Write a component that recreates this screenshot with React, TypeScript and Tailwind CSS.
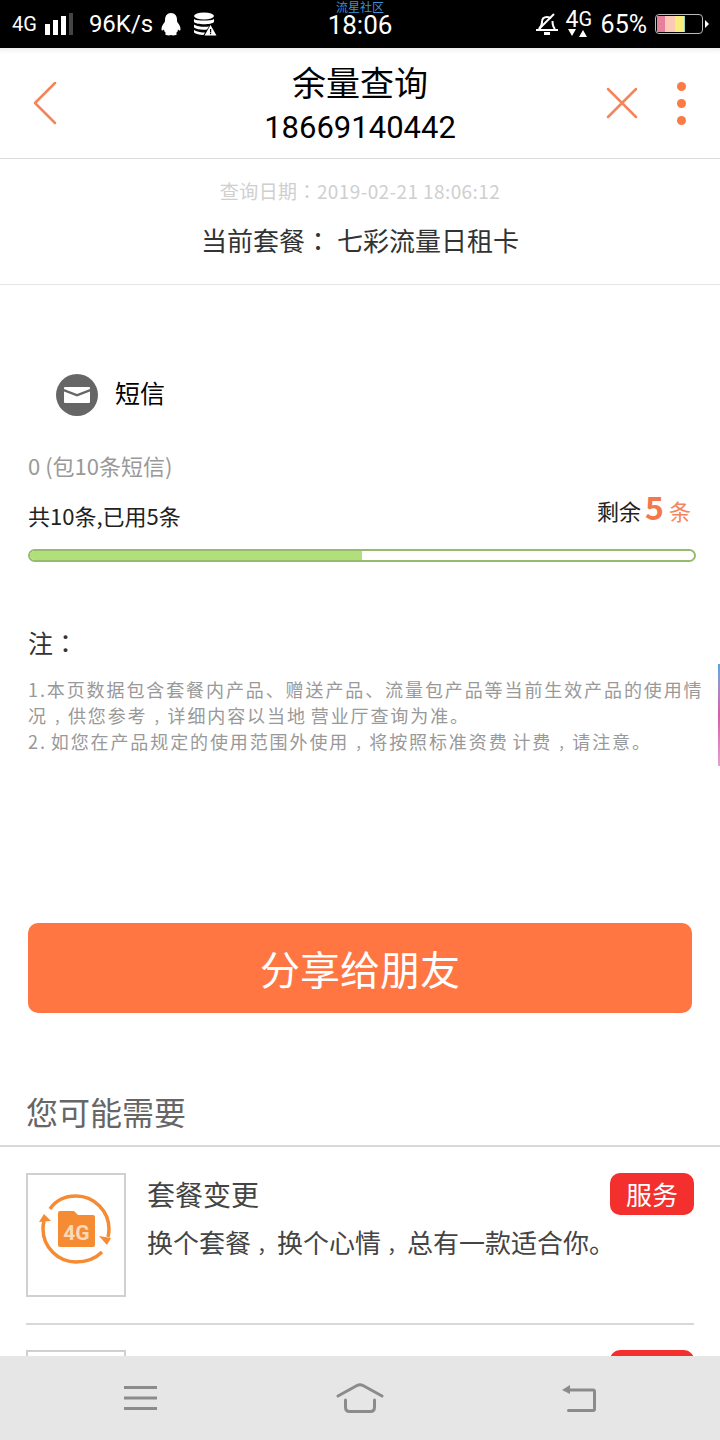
const FONT = '[font-family:"Noto_Sans_CJK_SC","Noto_Sans",sans-serif]'

// the phone font centres its colons and pushes commas to the middle of the cell
function Colon() {
  return <span className='[font-family:"Noto_Sans_CJK_TC",sans-serif]'>：</span>
}

function StatusBar() {
  return (
    <div className="relative flex h-[48px] shrink-0 items-center justify-between bg-black pl-[12px] pr-[11px] text-white">
      <div className="flex items-center">
        <span className="text-[20px] leading-none [font-family:Roboto,sans-serif]">4G</span>
        <svg width="30" height="22" viewBox="0 0 30 22" className="ml-[8px]">
          <rect x="0" y="11" width="5" height="11" fill="#fff" />
          <rect x="8" y="7" width="5" height="15" fill="#fff" />
          <rect x="16" y="3" width="5" height="19" fill="#fff" />
          <rect x="24" y="0" width="4" height="22" fill="#444" />
        </svg>
        <span className="ml-[14px] text-[24px] leading-none [font-family:Roboto,sans-serif]">96K/s</span>
        <svg width="20" height="24" viewBox="0 0 20 24" className="ml-[8px]" fill="#fff">
          <path d="M10 1c4 0 6 3 6 7 0 1 0 2 1 3 1.500 2 2.500 4 2.500 6 0 2-1 2-2.500 .5 0 1.500-1 3-2 3.500 1 .5 1 1.500 0 2-2 .5-4 .5-5 0-1 .5-3 .5-5 0-1-.5-1-1.500 0-2-1-.5-2-2-2-3.500-1.500 1.500-2.500 1.500-2.500-.5 0-2 1-4 2.500-6 1-1 1-2 1-3 0-4 2-7 6-7z" />
        </svg>
        <svg width="24" height="24" viewBox="0 0 24 24" className="ml-[12px]" fill="#fff">
          <ellipse cx="11" cy="4" rx="10" ry="3.500" />
          <path d="M1 7c2 2 18 2 20 0v3c-2 3-18 3-20 0z" />
          <path d="M1 12.500c3 2.500 12 2.500 15 2l-2 3c-5 .5-10 0-13-2z" />
          <path d="M1 18c3 2 8 2.500 11 2.500l-1.500 2.500c-4 0-8-1-9.500-2.500z" />
          <path d="M17.500 13l6 10.500h-12z" />
          <rect x="17" y="17" width="1.200" height="3.500" fill="#000" />
          <rect x="17" y="21" width="1.200" height="1.200" fill="#000" />
        </svg>
      </div>
      <div className="absolute left-0 right-0 top-0 flex flex-col items-center pt-[1px]">
        <span className={`text-[12px] leading-[12px] text-[#3f8fd8] ${FONT}`}>流星社区</span>
        <span className="text-[26px] leading-[25px] [font-family:Roboto,sans-serif]">18:06</span>
      </div>
      <div className="flex items-center">
        <svg width="22" height="22" viewBox="0 0 22 22" fill="none" stroke="#fff" strokeWidth="2">
          <path d="M3 16c2-2 3-4 3-7 0-3 2-5 5-5 1.500 0 3 .5 4 1.500M16.500 8c0 3 .5 6 2.500 8" />
          <path d="M18 1L3 16" />
          <path d="M0 17h22" />
          <path d="M8 20.500h6" strokeWidth="3" />
        </svg>
        <div className="ml-[8px] flex w-[28px] flex-col items-start">
          <div className="flex items-start leading-none [font-family:Roboto,sans-serif]">
            <span className="text-[23px] leading-[18px]">4</span>
            <span className="text-[20px] leading-[16px]">G</span>
          </div>
          <svg width="20" height="8" viewBox="0 0 20 8" fill="#fff" className="ml-[2px]">
            <path d="M0 0h8L4 7zM11 8h8l-4-7z" />
          </svg>
        </div>
        <span className="ml-[7px] text-[25px] leading-none [font-family:Roboto,sans-serif]">65%</span>
        <div className="ml-[8px] flex h-[20px] w-[48px] items-stretch rounded-[4px] border border-[#bbb] p-[1px]">
          <span className="w-[8px] bg-[#e6809c]" />
          <span className="w-[10px] bg-[#fbc9b5]" />
          <span className="w-[9px] bg-[#f7ec7c]" />
          <span className="w-[1px] bg-[#8fd6c8]" />
        </div>
        <span className="ml-[2px] h-0 w-0 border-y-[4px] border-l-[4px] border-y-transparent border-l-white" />
      </div>
    </div>
  )
}

function Header() {
  return (
    <div className="flex h-[111px] shrink-0 items-center border-b border-[#dcdcdc] bg-white shadow-[inset_0_6px_6px_-6px_rgba(0,0,0,0.15)]">
      <div className="flex w-[130px] pl-[33px]">
        <svg width="24" height="44" viewBox="0 0 24 44" fill="none" stroke="#f4845a" strokeWidth="2.500" strokeLinecap="round" strokeLinejoin="round">
          <path d="M22 2L2 22l20 20" />
        </svg>
      </div>
      <div className="flex flex-1 flex-col items-center pt-[4px] text-black">
        <span className={`text-[34px] leading-[42px] ${FONT}`}>余量查询</span>
        <span className="mt-[4px] text-[31px] leading-[42px] [font-family:Roboto,sans-serif]">18669140442</span>
      </div>
      <div className="flex w-[130px] items-center pl-[16px]">
        <svg width="32" height="32" viewBox="0 0 32 32" fill="none" stroke="#f4845a" strokeWidth="2.500" strokeLinecap="round">
          <path d="M2 2l28 28M30 2L2 30" />
        </svg>
        <div className="ml-[39px] flex flex-col gap-[8px]">
          <span className="h-[9px] w-[9px] rounded-full bg-[#fb7b45]" />
          <span className="h-[9px] w-[9px] rounded-full bg-[#fb7b45]" />
          <span className="h-[9px] w-[9px] rounded-full bg-[#fb7b45]" />
        </div>
      </div>
    </div>
  )
}

function Rental() {
  return (
    <div className="flex h-[126px] shrink-0 flex-col items-center border-b border-[#e6e6e6] pt-[19px]">
      <span className={`text-[19px] leading-[26px] tracking-[0.4px] text-[#cfcfcf] ${FONT}`}>查询日期<Colon />2019-02-21 18:06:12</span>
      <span className={`mt-[18px] text-[26px] leading-[36px] text-[#333] ${FONT}`}>当前套餐<Colon /> 七彩流量日租卡</span>
    </div>
  )
}

function NoteComma() {
  return <span className="pl-[6px] text-[14px] leading-none tracking-normal">，</span>
}

function Usage() {
  return (
    <div className="px-[28px]">
      <div className="flex items-center pl-[28px] pt-[89px]">
        <div className="flex h-[42px] w-[42px] items-center justify-center rounded-full bg-[#666]">
          <svg width="26" height="16" viewBox="0 0 26 16">
            <path d="M1 0h24a1 1 0 0 1 1 1v1L13 7 0 2V1a1 1 0 0 1 1-1z" fill="#fff" />
            <path d="M0 4.500L13 9.500l13-5V15a1 1 0 0 1-1 1H1a1 1 0 0 1-1-1z" fill="#fff" />
          </svg>
        </div>
        <span className={`ml-[17px] pb-[6px] text-[25px] leading-[36px] text-black ${FONT}`}>短信</span>
      </div>
      <div className={`mt-[34px] text-[22px] leading-[30px] text-[#999] ${FONT}`}>0 (包10条短信)</div>
      <div className="mt-[9px] flex items-end justify-between">
        <span className={`text-[22px] leading-[34px] text-[#222] ${FONT}`}>共10条,已用5条</span>
        <span className={`flex items-baseline pb-[5px] pr-[1px] text-[22px] leading-[34px] text-[#222] ${FONT}`}>
          剩余
          <span className="ml-[4px] text-[32px] font-bold leading-[34px] text-[#f4784a]">5</span>
          <span className="ml-[5px] text-[#f4845a]">条</span>
        </span>
      </div>
      <div className="mt-[17px] -mr-[4px] h-[13px] overflow-hidden rounded-full border-2 border-[#97bb6d] bg-white">
        <div className="h-full w-1/2 bg-[#b1df7b]" />
      </div>
      <div className={`mt-[62px] text-[25px] leading-[36px] text-[#333] ${FONT}`}>注<Colon /></div>
      <div className={`mt-[16px] -mr-[16px] text-[18px] leading-[26px] tracking-[1.9px] [word-spacing:-2px] text-[#999] ${FONT}`}>
        <p>
          <span>1.本页数据包含套餐内产品、赠送产品、流量包产品等当前生效产品的使用情</span>
          <span>况</span>
          <NoteComma />
          <span>供您参考</span>
          <NoteComma />
          <span>详细内容以当地 营业厅查询为准。</span>
        </p>
        <p>
          <span>2. 如您在产品规定的使用范围外使用</span>
          <NoteComma />
          <span>将按照标准资费 计费</span>
          <NoteComma />
          <span>请注意。</span>
        </p>
      </div>
    </div>
  )
}

function ChangeIcon() {
  return (
    <svg width="74" height="74" viewBox="0 0 74 74" fill="none">
      <path d="M11 17C17 8 26 4 37 4c18 0 33 15 33 33 0 3-.5 6-1 8" stroke="#f58b33" strokeWidth="3.500" />
      <path d="M63 60c-6 6-15 10-26 10C19 70 4 55 4 37c0-3 .500-6 1-8" stroke="#f58b33" strokeWidth="3.500" />
      <path d="M0 30l5-8 7 7z" fill="#f58b33" />
      <path d="M60 44l12 2-4 7z" fill="#f58b33" />
      <path d="M19 21a2 2 0 0 1 2-2h14l4 4h15a2 2 0 0 1 2 2v28a2 2 0 0 1-2 2H21a2 2 0 0 1-2-2z" fill="#f58b33" />
      <text x="37.500" y="48" textAnchor="middle" fontSize="21" fontWeight="700" fill="#fbd9b8" fontFamily="Roboto, sans-serif">4G</text>
    </svg>
  )
}

function ItemComma() {
  return <span className="pl-[6px] text-[20px] leading-none">，</span>
}

function Recommend() {
  return (
    <div>
      <div className={`px-[26px] text-[32px] leading-[42px] text-[#666] ${FONT}`}>您可能需要</div>
      <div className="mt-[13px] border-t-2 border-[#d8d8d8] px-[26px] pt-[26px]">
        <div className="flex border-b-2 border-[#d8d8d8] pb-[26px]">
          <div className="flex h-[124px] w-[100px] shrink-0 items-center justify-center border-2 border-[#d0d0d0] pb-[12px]">
            <ChangeIcon />
          </div>
          <div className="ml-[21px] min-w-0 flex-1 whitespace-nowrap pt-[3px]">
            <div className={`text-[28px] leading-[36px] text-[#444] ${FONT}`}>套餐变更</div>
            <div className={`mt-[12px] text-[26px] leading-[36px] text-[#444] ${FONT}`}>换个套餐<ItemComma />换个心情<ItemComma />总有一款适合你。</div>
          </div>
          <span className={`h-[42px] w-[84px] shrink-0 rounded-[10px] bg-[#f4302f] text-center text-[26px] leading-[42px] text-white ${FONT}`}>服务</span>
        </div>
        <div className="flex justify-between pt-[25px]">
          <div className="h-[124px] w-[100px] shrink-0 border-2 border-[#d0d0d0]" />
          <div className="h-[42px] w-[84px] shrink-0 rounded-[10px] bg-[#f4302f]" />
        </div>
      </div>
    </div>
  )
}

function NavBar() {
  return (
    <div className="flex h-[84px] shrink-0 items-center justify-between bg-[#e6e6e6] px-[124px]">
      <svg width="33" height="24" viewBox="0 0 33 24" fill="#8b8b8b">
        <rect x="0" y="0" width="33" height="3" />
        <rect x="0" y="10.500" width="33" height="3" />
        <rect x="0" y="21" width="33" height="3" />
      </svg>
      <svg width="48" height="30" viewBox="0 0 48 30" fill="none" stroke="#8b8b8b" strokeWidth="3" strokeLinecap="round" strokeLinejoin="round">
        <path d="M2 13L21 2.500q3-1.500 6 0L46 13" />
        <path d="M9.500 17v7q0 4.500 4 4.500h21q4 0 4-4.500v-7" />
      </svg>
      <svg width="34" height="27" viewBox="0 0 34 27" fill="none" stroke="#8b8b8b" strokeWidth="3" strokeLinecap="round">
        <path d="M6 5h25q1.500 0 1.500 1.500V24q0 1.500-1.500 1.500H6.500" />
        <path d="M0 5l8-5v9z" fill="#8b8b8b" stroke="none" />
      </svg>
    </div>
  )
}

export default function App() {
  return (
    <div className="relative flex h-[1440px] w-[720px] flex-col overflow-hidden bg-white">
      <StatusBar />
      <Header />
      <Rental />
      <div className="flex-1 overflow-hidden">
        <Usage />
        <div className="px-[28px] pt-[169px]">
          <button className={`h-[90px] w-full rounded-[10px] bg-[#ff7643] text-[40px] text-white ${FONT}`}>分享给朋友</button>
        </div>
        <div className="pt-[77px]">
          <Recommend />
        </div>
      </div>
      <NavBar />
      <div className="absolute right-0 top-[664px] h-[102px] w-[2px] bg-gradient-to-b from-[#4fa8e0] via-[#d85aa8] to-[#e0a0d8]" />
    </div>
  )
}
